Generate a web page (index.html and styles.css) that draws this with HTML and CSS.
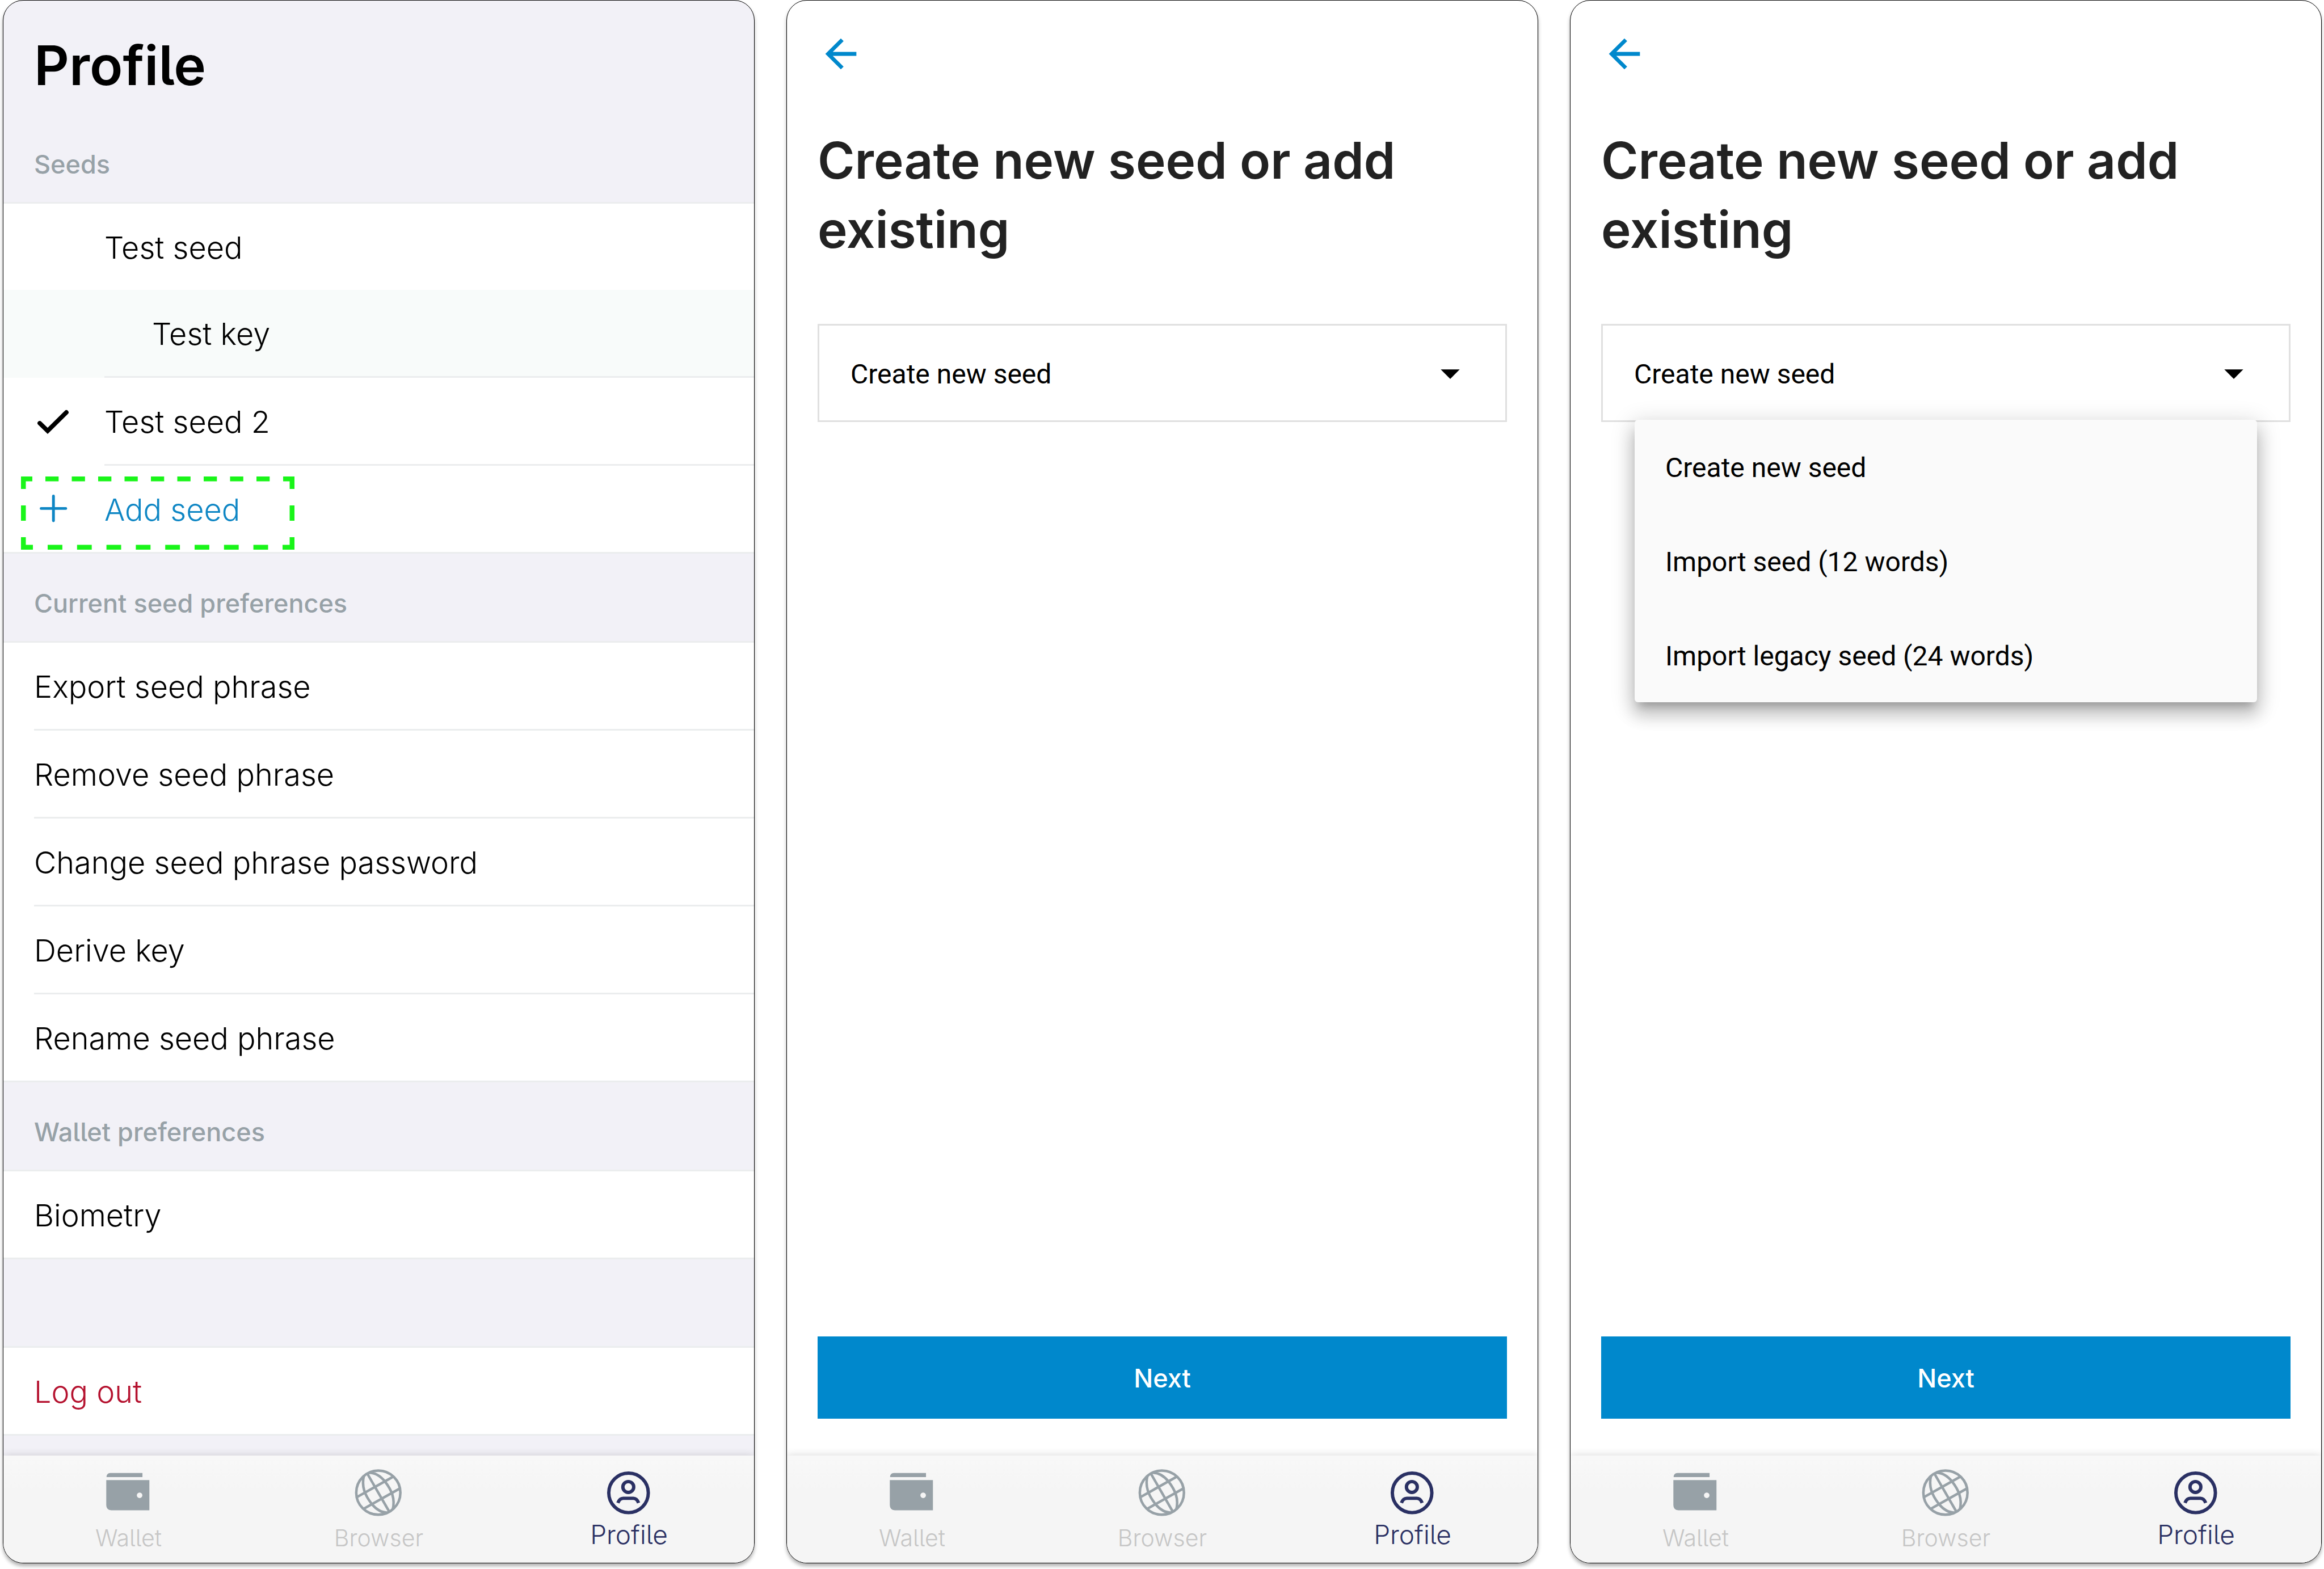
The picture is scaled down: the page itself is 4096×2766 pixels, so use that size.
FILE: index.html
```html
<!DOCTYPE html>
<html lang="en">
<head>
<meta charset="utf-8">
<meta name="viewport" content="width=device-width, initial-scale=1">
<title>Add seed</title>
<link rel="stylesheet" href="styles.css">
</head>
<body>
<svg class="defs" aria-hidden="true">
  <symbol id="icon-wallet" viewBox="0 0 540 540">
    <path fill="currentColor" d="M77 132Q78 98 110 97H388V132Z"/>
    <path fill="currentColor" fill-rule="evenodd" d="M75 158H448V420H118Q75 414 75 375ZM363 266a24 24 0 1 0 1 0Z"/>
  </symbol>
  <symbol id="icon-browser" viewBox="0 0 540 540">
    <g fill="none" stroke="currentColor" stroke-width="22">
      <circle cx="264" cy="267" r="191"/>
      <path d="M80 305L395 128M135 408L455 228M172 108L355 425"/>
      <path d="M140 118C115 215 150 290 205 362C245 412 290 440 345 440"/>
      <path d="M388 416C413 319 378 244 323 172C283 122 238 94 183 94"/>
    </g>
  </symbol>
  <symbol id="icon-profile" viewBox="0 0 540 540">
    <g fill="none" stroke="currentColor" stroke-width="29">
      <circle cx="264" cy="269" r="171"/>
      <circle cx="262" cy="218" r="47"/>
      <path d="M172 356Q186 316 218 316H306Q336 316 351 356"/>
    </g>
  </symbol>
  <symbol id="icon-back" viewBox="0 0 24 24">
    <path fill="currentColor" d="M20 11H7.83l5.59-5.59L12 4l-8 8 8 8 1.41-1.41L7.83 13H20v-2z"/>
  </symbol>
  <symbol id="icon-caret" viewBox="0 0 24 24">
    <path fill="currentColor" d="M7 10l5 5 5-5z"/>
  </symbol>
</svg>

<main class="board">
  <section class="screen screen-profile">
    <div class="content">
      <h1 class="page-title">Profile</h1>

      <h2 class="section-title">Seeds</h2>
      <ul class="list">
        <li class="row row-plain"><span class="row-icon"></span><button class="row-body" type="button">Test seed</button></li>
        <li class="row row-key"><span class="row-icon"></span><button class="row-body" type="button">Test key</button></li>
        <li class="row">
          <svg class="row-icon" viewBox="115 47 332 332" aria-hidden="true"><path d="M164 223L232 289L393 130" fill="none" stroke="#000" stroke-width="38" stroke-linecap="round"/></svg>
          <button class="row-body" type="button">Test seed 2</button>
        </li>
        <li class="row row-add">
          <svg class="row-icon" viewBox="115 805 332 332" aria-hidden="true"><path d="M176 968H388M282 861V1074" fill="none" stroke="currentColor" stroke-width="24" stroke-linecap="round"/></svg>
          <button class="row-body" type="button">Add seed</button>
          <svg class="highlight" viewBox="0 0 482 129" aria-hidden="true">
            <g fill="none" stroke="#19f519" stroke-width="9">
              <path d="M4 22V4H20M462 4H478V22M478 107V125H461M21 125H4V107"/>
              <path stroke-dasharray="23.3 23.2" d="M43 4H440"/>
              <path stroke-dasharray="25.9 25.9" d="M47 125H436"/>
              <path d="M4 51V78M478 51V78"/>
            </g>
          </svg>
        </li>
      </ul>

      <h2 class="section-title">Current seed preferences</h2>
      <ul class="list">
        <li class="row"><button class="row-body" type="button">Export seed phrase</button></li>
        <li class="row"><button class="row-body" type="button">Remove seed phrase</button></li>
        <li class="row"><button class="row-body" type="button">Change seed phrase password</button></li>
        <li class="row"><button class="row-body" type="button">Derive key</button></li>
        <li class="row"><button class="row-body" type="button">Rename seed phrase</button></li>
      </ul>

      <h2 class="section-title">Wallet preferences</h2>
      <ul class="list">
        <li class="row"><button class="row-body" type="button">Biometry</button></li>
      </ul>

      <div class="spacer"></div>
      <ul class="list">
        <li class="row row-logout"><button class="row-body" type="button">Log out</button></li>
      </ul>
    </div>
    <nav class="tabs">
      <a class="tab" href="#wallet"><svg class="tab-icon" aria-hidden="true"><use href="#icon-wallet"/></svg>Wallet</a>
      <a class="tab" href="#browser"><svg class="tab-icon" aria-hidden="true"><use href="#icon-browser"/></svg>Browser</a>
      <a class="tab tab-active" href="#profile" aria-current="page"><svg class="tab-icon" aria-hidden="true"><use href="#icon-profile"/></svg>Profile</a>
    </nav>
  </section>

  <section class="screen">
    <div class="content form">
      <button class="back" type="button" aria-label="Back"><svg class="back-icon" aria-hidden="true"><use href="#icon-back"/></svg></button>
      <h1 class="form-title">Create new seed or add existing</h1>
      <div class="picker">
        <select class="select" aria-label="Seed type">
          <option>Create new seed</option>
          <option>Import seed (12 words)</option>
          <option>Import legacy seed (24 words)</option>
        </select>
        <svg class="caret" aria-hidden="true"><use href="#icon-caret"/></svg>
      </div>
      <button class="next" type="button">Next</button>
    </div>
    <nav class="tabs">
      <a class="tab" href="#wallet"><svg class="tab-icon" aria-hidden="true"><use href="#icon-wallet"/></svg>Wallet</a>
      <a class="tab" href="#browser"><svg class="tab-icon" aria-hidden="true"><use href="#icon-browser"/></svg>Browser</a>
      <a class="tab tab-active" href="#profile" aria-current="page"><svg class="tab-icon" aria-hidden="true"><use href="#icon-profile"/></svg>Profile</a>
    </nav>
  </section>

  <section class="screen">
    <div class="content form">
      <button class="back" type="button" aria-label="Back"><svg class="back-icon" aria-hidden="true"><use href="#icon-back"/></svg></button>
      <h1 class="form-title">Create new seed or add existing</h1>
      <div class="picker">
        <select class="select" aria-label="Seed type">
          <option>Create new seed</option>
          <option>Import seed (12 words)</option>
          <option>Import legacy seed (24 words)</option>
        </select>
        <svg class="caret" aria-hidden="true"><use href="#icon-caret"/></svg>
        <div class="menu" role="listbox" aria-label="Seed type">
          <button class="menu-item" type="button" role="option" aria-selected="true">Create new seed</button>
          <button class="menu-item" type="button" role="option">Import seed (12 words)</button>
          <button class="menu-item" type="button" role="option">Import legacy seed (24 words)</button>
        </div>
      </div>
      <button class="next" type="button">Next</button>
    </div>
    <nav class="tabs">
      <a class="tab" href="#wallet"><svg class="tab-icon" aria-hidden="true"><use href="#icon-wallet"/></svg>Wallet</a>
      <a class="tab" href="#browser"><svg class="tab-icon" aria-hidden="true"><use href="#icon-browser"/></svg>Browser</a>
      <a class="tab tab-active" href="#profile" aria-current="page"><svg class="tab-icon" aria-hidden="true"><use href="#icon-profile"/></svg>Profile</a>
    </nav>
  </section>
</main>
</body>
</html>
```
FILE: styles.css
```css
*,
*::before,
*::after {
  box-sizing: border-box;
}

body {
  margin: 0;
  background: #fff;
  color: #000;
  font-family: Inter, "Liberation Sans", sans-serif;
  font-feature-settings: "cv05";
}

h1,
h2,
ul {
  margin: 0;
  padding: 0;
}

button,
select {
  margin: 0;
  padding: 0;
  border: 0;
  border-radius: 0;
  background: none;
  color: inherit;
  font: inherit;
  font-feature-settings: inherit;
  text-align: left;
  cursor: pointer;
}

.defs {
  display: none;
}

.board {
  display: grid;
  grid-template-columns: repeat(3, minmax(0, 1fr));
  gap: 56px;
  min-height: 100vh;
  padding: 0 4px 10px 5px;
}

.screen {
  display: flex;
  flex-direction: column;
  overflow: hidden;
  border: 1px solid #000;
  border-radius: 36px;
  background: #fff;
  box-shadow: 0 5px 6px rgba(0, 0, 0, 0.3);
}

.screen-profile {
  background: #f2f1f7;
}

.content {
  display: flex;
  flex: 1;
  flex-direction: column;
}

/* Profile list */

.page-title {
  padding: 60px 54px 34px;
  font-size: 96px;
  font-weight: 600;
  line-height: 108px;
}

.section-title {
  padding: 21px 54px 0;
  border-bottom: 3px solid #ebedee;
  color: #97a1a7;
  font-size: 45px;
  font-weight: 500;
  line-height: 132px;
}

.list {
  list-style: none;
}

.row {
  position: relative;
  display: flex;
  align-items: center;
  padding-left: 54px;
  background: #fff;
  font-size: 54px;
  font-weight: 300;
}

.row-icon {
  flex: none;
  width: 68px;
  height: 68px;
  margin-right: 56px;
}

.row-body {
  flex: 1;
  padding-top: 4px;
  border-bottom: 3px solid #ebedee;
  line-height: 148px;
}

.row-plain .row-body {
  border-bottom: 0;
}

.row-key {
  background: #f8fbfa;
}

.row-key .row-body {
  padding-left: 84px;
}

.row-add {
  color: #0e86c4;
}

.row:last-child {
  border-bottom: 3px solid #ebedee;
}

.row:last-child .row-body {
  border-bottom: 0;
}

.row-logout {
  color: #b5122f;
}

.highlight {
  position: absolute;
  top: 19px;
  left: 31px;
  width: 482px;
  height: 129px;
  pointer-events: none;
}

.list + .section-title {
  padding-top: 22px;
}

.spacer {
  height: 156px;
  border-bottom: 3px solid #ebedee;
}

/* Seed form */

.form {
  padding: 53px 54px 65px;
}

.back {
  width: 82px;
  height: 82px;
  color: #0088cc;
}

.back-icon {
  display: block;
  width: 100%;
  height: 100%;
}

.form-title {
  margin: 86px 0 105px;
  color: #222;
  font-size: 89px;
  font-weight: 600;
  line-height: 122px;
}

.picker {
  position: relative;
  display: grid;
  align-items: center;
  font-family: Roboto, "Liberation Sans", sans-serif;
  font-size: 48px;
}

.select {
  grid-area: 1 / 1;
  height: 173px;
  padding: 3px 55px 0;
  border: 3px solid #e0e0e0;
  appearance: none;
}

.caret {
  grid-area: 1 / 1;
  justify-self: end;
  width: 80px;
  height: 80px;
  margin-right: 60px;
  pointer-events: none;
}

.menu {
  position: absolute;
  top: 169px;
  right: 59px;
  left: 59px;
  border-radius: 6px;
  background: #fafafa;
  box-shadow:
    0 14px 14px -8px rgba(0, 0, 0, 0.2),
    0 22px 28px 3px rgba(0, 0, 0, 0.16),
    0 8px 39px 6px rgba(0, 0, 0, 0.14);
}

.menu-item {
  display: block;
  width: 100%;
  padding: 4px 54px 0;
  line-height: 162px;
}

.next {
  margin-top: auto;
  padding-top: 3px;
  background: #0088cc;
  color: #fff;
  font-size: 45px;
  font-weight: 500;
  line-height: 142px;
  text-align: center;
}

/* Bottom navigation */

.tabs {
  display: grid;
  grid-template-columns: repeat(3, 1fr);
  height: 189px;
  padding-top: 11px;
  background: linear-gradient(#f8f8f8, #f5f5f5 60px);
  box-shadow: 0 0 14px rgba(0, 0, 0, 0.16);
}

.tab {
  display: flex;
  flex-direction: column;
  align-items: center;
  color: #c6c6c6;
  font-size: 41px;
  font-weight: 300;
  line-height: 48px;
  text-decoration: none;
}

.tab-icon {
  width: 110px;
  height: 110px;
  color: #97a1a7;
}

.tab-active,
.tab-active .tab-icon {
  color: #2a3063;
}

.tab-active {
  font-size: 46px;
  line-height: 36px;
}
```
